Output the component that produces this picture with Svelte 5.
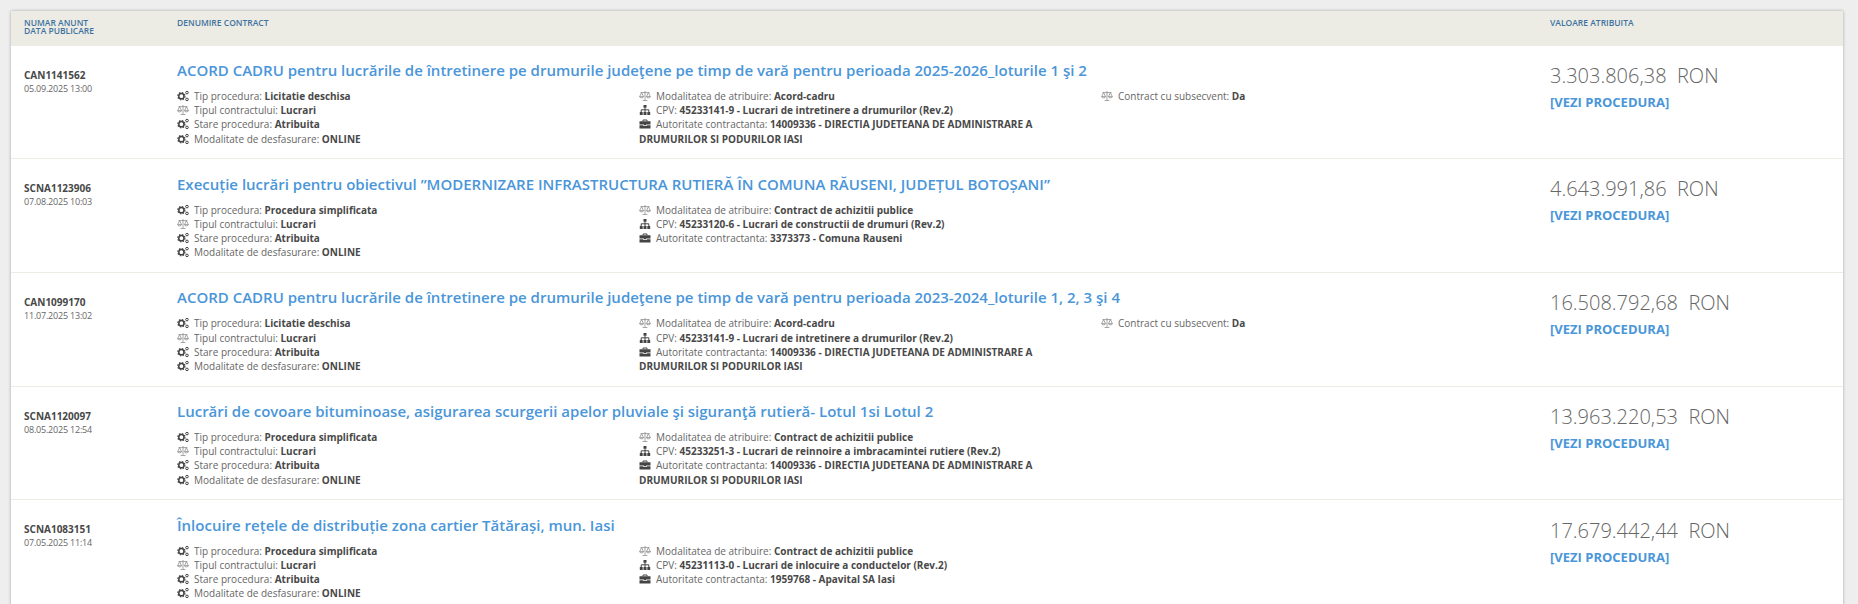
<script>
  const rows = [
    { id: 'CAN1141562', date: '05.09.2025 13:00', title: 'ACORD CADRU pentru lucrările de întretinere pe drumurile judeţene pe timp de vară pentru perioada 2025-2026_loturile 1 şi 2', tip: 'Licitatie deschisa', mod: 'Acord-cadru', cpv: '45233141-9 - Lucrari de intretinere a drumurilor (Rev.2)', aut: '14009336 - DIRECTIA JUDETEANA DE ADMINISTRARE A DRUMURILOR SI PODURILOR IASI', sub: 'Da', val: '3.303.806,38' },
    { id: 'SCNA1123906', date: '07.08.2025 10:03', title: 'Execuție lucrări pentru obiectivul ”MODERNIZARE INFRASTRUCTURA RUTIERĂ ÎN COMUNA RĂUSENI, JUDEȚUL BOTOȘANI”', tip: 'Procedura simplificata', mod: 'Contract de achizitii publice', cpv: '45233120-6 - Lucrari de constructii de drumuri (Rev.2)', aut: '3373373 - Comuna Rauseni', val: '4.643.991,86' },
    { id: 'CAN1099170', date: '11.07.2025 13:02', title: 'ACORD CADRU pentru lucrările de întretinere pe drumurile judeţene pe timp de vară pentru perioada 2023-2024_loturile 1, 2, 3 şi 4', tip: 'Licitatie deschisa', mod: 'Acord-cadru', cpv: '45233141-9 - Lucrari de intretinere a drumurilor (Rev.2)', aut: '14009336 - DIRECTIA JUDETEANA DE ADMINISTRARE A DRUMURILOR SI PODURILOR IASI', sub: 'Da', val: '16.508.792,68' },
    { id: 'SCNA1120097', date: '08.05.2025 12:54', title: 'Lucrări de covoare bituminoase, asigurarea scurgerii apelor pluviale şi siguranţă rutieră- Lotul 1si Lotul 2', tip: 'Procedura simplificata', mod: 'Contract de achizitii publice', cpv: '45233251-3 - Lucrari de reinnoire a imbracamintei rutiere (Rev.2)', aut: '14009336 - DIRECTIA JUDETEANA DE ADMINISTRARE A DRUMURILOR SI PODURILOR IASI', val: '13.963.220,53' },
    { id: 'SCNA1083151', date: '07.05.2025 11:14', title: 'Înlocuire rețele de distribuție zona cartier Tătărași, mun. Iasi', tip: 'Procedura simplificata', mod: 'Contract de achizitii publice', cpv: '45231113-0 - Lucrari de inlocuire a conductelor (Rev.2)', aut: '1959768 - Apavital SA Iasi', val: '17.679.442,44' }
  ];
</script>

{#snippet cogs()}
  <svg class="ico" viewBox="0 0 12 12">
    <circle cx="4.4" cy="6.2" r="2.6" fill="none" stroke="#444" stroke-width="1.5"/>
    <circle cx="4.4" cy="6.2" r="3.6" fill="none" stroke="#444" stroke-width="1.3" stroke-dasharray="1.4 1.43"/>
    <circle cx="10" cy="2.6" r="1.3" fill="none" stroke="#444" stroke-width="1"/>
    <circle cx="10" cy="9.4" r="1.3" fill="none" stroke="#444" stroke-width="1"/>
  </svg>
{/snippet}

{#snippet scale()}
  <svg class="ico" viewBox="0 0 12 12">
    <path d="M6 1v9M3.600 10.500h4.800M1.500 2.600h9M2.600 2.600 .7 6.600M2.600 2.600l1.900 4M9.400 2.600 7.500 6.600M9.400 2.600l1.900 4M.5 6.600c.3 1.700 3.900 1.700 4.200 0zM7.300 6.600c.3 1.700 3.900 1.700 4.200 0z" fill="none" stroke="#888" stroke-width=".75"/>
  </svg>
{/snippet}

{#snippet sitemap()}
  <svg class="ico" viewBox="0 0 12 12">
    <path d="M4.500 1h3v2.800h-3zM.8 8h2.900v3H.8zM4.500 8h3v3h-3zM8.300 8h2.900v3H8.300z" fill="#444"/>
    <path d="M6 3.500V8M2.200 8V5.800h7.600V8" fill="none" stroke="#444"/>
  </svg>
{/snippet}

{#snippet briefcase()}
  <svg class="ico" viewBox="0 0 12 12">
    <path d="M.5 3.200h11v3.300H7v.8H5v-.8H.5zM.5 7.300H4.300v.8h3.400v-.8h3.800v3.200H.5z" fill="#444"/>
    <path d="M4 3.200V2h4v1.200" fill="none" stroke="#444"/>
  </svg>
{/snippet}

<div class="page">
  <div class="card">
    <div class="head">
      <div class="c1">NUMAR ANUNT<br />DATA PUBLICARE</div>
      <div class="c2">DENUMIRE CONTRACT</div>
      <div class="c3">VALOARE ATRIBUITA</div>
    </div>
    {#each rows as r}
      <div class="row">
        <div class="c1">
          <div class="id">{r.id}</div>
          <div class="date">{r.date}</div>
        </div>
        <div class="c2">
          <a class="title" href="#top">{r.title}</a>
          <div class="meta">
            <div class="col">
              <div class="line">{@render cogs()}Tip procedura: <b>{r.tip}</b></div>
              <div class="line">{@render scale()}Tipul contractului: <b>Lucrari</b></div>
              <div class="line">{@render cogs()}Stare procedura: <b>Atribuita</b></div>
              <div class="line">{@render cogs()}Modalitate de desfasurare: <b>ONLINE</b></div>
            </div>
            <div class="col">
              <div class="line">{@render scale()}Modalitatea de atribuire: <b>{r.mod}</b></div>
              <div class="line">{@render sitemap()}CPV: <b>{r.cpv}</b></div>
              <div class="line">{@render briefcase()}Autoritate contractanta: <b>{r.aut}</b></div>
            </div>
            <div class="col">
              {#if r.sub}
                <div class="line">{@render scale()}Contract cu subsecvent: <b>{r.sub}</b></div>
              {/if}
            </div>
          </div>
        </div>
        <div class="c3">
          <div class="val">{r.val}&nbsp; RON</div>
          <a class="more" href="#top">[VEZI PROCEDURA]</a>
        </div>
      </div>
    {/each}
  </div>
</div>

<style>
  :global(body) {
    margin: 0;
    background: #eeeeee;
    font-family: "Open Sans", sans-serif;
    color: #444;
    overflow: hidden;
  }
  .page {
    height: 604px;
    overflow: hidden;
    padding: 11px 15px 0 11px;
  }
  .card {
    background: #fff;
    box-shadow: 0 0 3px rgba(0, 0, 0, 0.3);
    opacity: 0.999;
  }
  .head,
  .row {
    display: grid;
    grid-template-columns: 153px 1373px 1fr;
    padding-left: 13px;
  }
  .head {
    height: 34.5px;
    box-sizing: border-box;
    background: #ecece4;
    padding-top: 8px;
    font-size: 8.5px;
    line-height: 8px;
    font-weight: 600;
    color: #3f72a0;
  }
  .row {
    height: 113.7px;
    box-sizing: border-box;
    padding-top: 14.5px;
    border-bottom: 1px solid #ecece4;
  }
  .id {
    margin-top: 7.7px;
    font-size: 10px;
    line-height: 14px;
    font-weight: 700;
    color: #484848;
  }
  .date {
    font-size: 9px;
    line-height: 14px;
    letter-spacing: -0.2px;
    color: #666;
  }
  .title {
    display: block;
    font-size: 15px;
    line-height: 20px;
    font-weight: 600;
    color: #4a96d9;
    text-decoration: none;
  }
  .meta {
    display: grid;
    grid-template-columns: 462px 462px 1fr;
    margin-top: 9px;
    font-size: 10px;
    line-height: 14.2px;
    color: #666;
  }
  .col {
    width: 414px;
  }
  .line b {
    font-weight: 700;
    color: #484848;
  }
  .ico {
    display: inline-block;
    width: 12px;
    height: 12px;
    margin-right: 5px;
    vertical-align: -2px;
  }
  .val {
    font-size: 20px;
    line-height: 24px;
    font-weight: 300;
    margin-top: 3.8px;
    color: #666;
  }
  .more {
    display: block;
    margin-top: 4px;
    font-size: 13px;
    line-height: 20px;
    font-weight: 700;
    color: #4a96d9;
    text-decoration: none;
  }
</style>
